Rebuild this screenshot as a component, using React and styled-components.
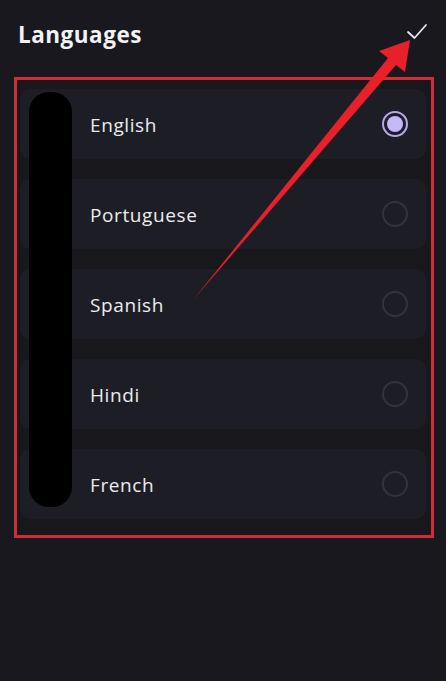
import React from 'react';
import styled, { createGlobalStyle } from 'styled-components';

const languages = ['English', 'Portuguese', 'Spanish', 'Hindi', 'French'];

export default function App() {
  return (
    <Page>
      <GlobalStyle />
      <Header>
        <Title>Languages</Title>
        <CheckButton aria-label="Done">
          <svg width="24" height="20" viewBox="0 0 24 20">
            <path d="M3 10 L9.5 16 L21 3" fill="none" stroke="#e6e6ea" strokeWidth="1.8" strokeLinecap="round" strokeLinejoin="round" />
          </svg>
        </CheckButton>
      </Header>
      <Frame>
        <Redaction />
        {languages.map((lang, i) => (
          <Row key={lang}>
            <Label>{lang}</Label>
            <Radio selected={i === 0} />
          </Row>
        ))}
      </Frame>
      <Arrow width="446" height="681" viewBox="0 0 446 681">
        <polygon
          points="193,300 388,58 379,51 410,40 405,72 396,65"
          fill="#e8202a"
        />
      </Arrow>
    </Page>
  );
}

const GlobalStyle = createGlobalStyle`
  html, body {
    margin: 0;
    padding: 0;
    background: #18181e;
  }
  * { box-sizing: border-box; }
`;

const Page = styled.div`
  position: relative;
  width: 446px;
  height: 681px;
  background: #18181e;
  font-family: 'Open Sans', 'Noto Sans', sans-serif;
  overflow: hidden;
`;

const Header = styled.div`
  display: flex;
  align-items: center;
  justify-content: space-between;
  height: 77px;
  padding: 0 18px 9px 18px;
`;

const Title = styled.h1`
  margin: 0;
  color: #f2f2f4;
  font-size: 22.5px;
  font-weight: 700;
  letter-spacing: 0.5px;
`;

const CheckButton = styled.div`
  display: flex;
  margin-top: -4px;
  margin-right: -1px;
`;

const Frame = styled.div`
  position: relative;
  margin: 0 12px 0 14px;
  border: 3px solid #cf2e38;
  padding: 9px 5px 16px 3px;
  display: flex;
  flex-direction: column;
  gap: 20px;
  background: #17171c;
`;

const Row = styled.div`
  height: 70px;
  display: flex;
  align-items: center;
  justify-content: space-between;
  padding: 2px 18px 0 70px;
  background: #1d1e25;
  border-radius: 10px;
`;

const Label = styled.span`
  color: #ececee;
  font-size: 19px;
  font-weight: 500;
  letter-spacing: 0.6px;
`;

const Radio = styled.span`
  width: 26px;
  height: 26px;
  margin-top: -2px;
  border-radius: 50%;
  border: 2px solid ${p => (p.selected ? '#b7a6ec' : '#33343b')};
  display: flex;
  align-items: center;
  justify-content: center;
  &::after {
    content: '';
    width: 16px;
    height: 16px;
    border-radius: 50%;
    background: ${p => (p.selected ? '#c6b7fb' : 'transparent')};
  }
`;

const Redaction = styled.div`
  position: absolute;
  left: 12px;
  top: 12px;
  width: 43px;
  height: 415px;
  background: #000;
  border-radius: 20px;
`;

const Arrow = styled.svg`
  position: absolute;
  left: 0;
  top: 0;
  pointer-events: none;
`;
